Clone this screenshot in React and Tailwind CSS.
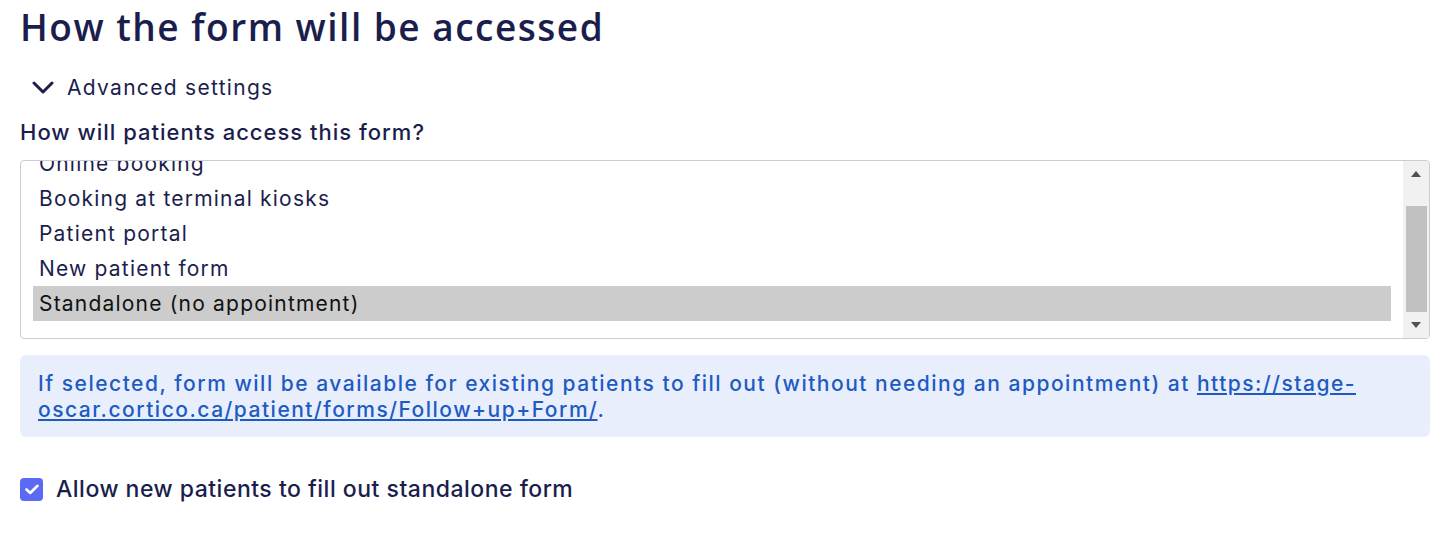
import React from "react";

const options = [
  "Online booking",
  "Booking at terminal kiosks",
  "Patient portal",
  "New patient form",
  "Standalone (no appointment)",
];

function Scrollbar() {
  return (
    <div className="w-[26px] bg-[#f1f1f1] flex flex-col items-center">
      <div className="h-[26px] flex items-center justify-center">
        <svg width="10" height="6" viewBox="0 0 10 6">
          <path d="M0 6 L5 0 L10 6 Z" fill="#505050" />
        </svg>
      </div>
      <div className="h-[20px]" />
      <div className="w-[21px] h-[107px] bg-[#c1c1c1]" />
      <div className="flex-1" />
      <div className="h-[26px] flex items-center justify-center">
        <svg width="10" height="6" viewBox="0 0 10 6">
          <path d="M0 0 L5 6 L10 0 Z" fill="#505050" />
        </svg>
      </div>
    </div>
  );
}

export default function App() {
  const font = { fontFamily: "Inter, 'Noto Sans', sans-serif" };
  return (
    <div
      className="min-h-[538px] bg-white px-[20px] pt-[4px] text-[#1b1e4d]"
      style={font}
    >
      <h1
        className="text-[37px] leading-[46px] font-semibold tracking-[1.5px] text-[#1b1e4d]"
        style={{ fontFamily: "'Open Sans', sans-serif" }}
      >
        How the form will be accessed
      </h1>

      <button className="mt-[24px] ml-[12px] flex items-center gap-[13px] text-[21px] leading-[28px] tracking-[1.3px] text-[#1b1e4d]">
        <svg width="22" height="14" viewBox="0 0 22 14" fill="none">
          <path
            d="M2 2 L11 11 L20 2"
            stroke="#1b1e4d"
            strokeWidth="3"
            strokeLinecap="round"
            strokeLinejoin="round"
          />
        </svg>
        Advanced settings
      </button>

      <div className="mt-[17px] text-[22px] leading-[26px] font-medium tracking-[1px] text-[#1b1e4d]">
        How will patients access this form?
      </div>

      <div className="mt-[15px] h-[179px] border border-[#c9ccd8] rounded-[4px] flex overflow-hidden">
        <div className="flex-1 overflow-hidden px-[12px]">
          <div className="-mt-[15px]">
            {options.map((o, i) => (
              <div
                key={o}
                className={`h-[35px] flex items-center px-[6px] text-[21px] tracking-[1.2px] text-[#1b1e4d] ${
                  i === options.length - 1 ? "bg-[#cccccc] text-[#111]" : ""
                }`}
              >
                {o}
              </div>
            ))}
          </div>
        </div>
        <Scrollbar />
      </div>

      <div className="mt-[16px] bg-[#e8eefc] rounded-[6px] px-[18px] pt-[16px] pb-[14px] text-[21px] leading-[26px] font-medium tracking-[1.5px] text-[#1d5bc2]">
        If selected, form will be available for existing patients to fill out
        (without needing an appointment) at{" "}
        <a href="#" className="underline">
          https://stage-oscar.cortico.ca/patient/forms/Follow+up+Form/
        </a>
        .
      </div>

      <label className="mt-[38px] flex items-center gap-[13px] text-[23px] leading-[28px] font-medium tracking-[0.5px] text-[#1b1e4d]">
        <span className="w-[23px] h-[23px] rounded-[4px] bg-[#5b6af5] flex items-center justify-center">
          <svg width="14" height="11" viewBox="0 0 14 11" fill="none">
            <path
              d="M1.5 5.5 L5.2 9 L12.5 1.8"
              stroke="white"
              strokeWidth="2.6"
              strokeLinecap="round"
              strokeLinejoin="round"
            />
          </svg>
        </span>
        Allow new patients to fill out standalone form
      </label>
    </div>
  );
}
